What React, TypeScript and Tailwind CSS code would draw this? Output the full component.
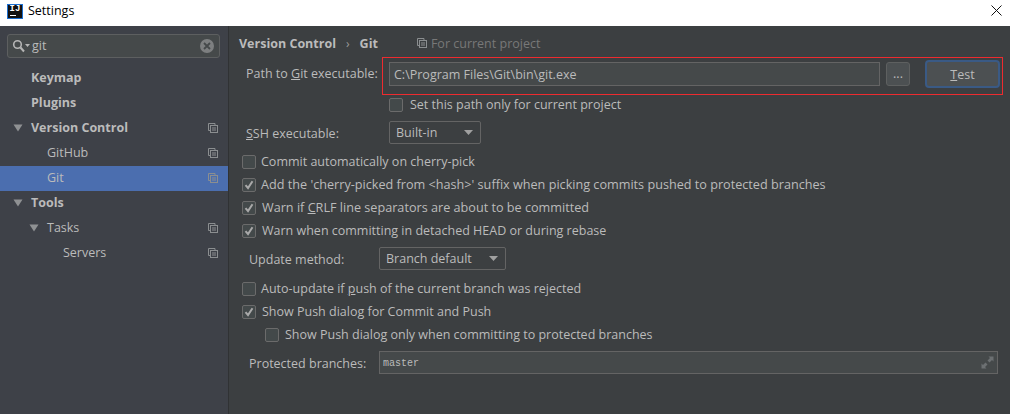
import React from "react";

const CopyIcon = () => (
  <svg width="10" height="10" viewBox="0 0 10 10" fill="none" stroke="#8b8e90" strokeWidth="1" className="shrink-0 mb-[2px]">
    <path d="M2.5 7.5H0.5V0.5H7V2.5" />
    <rect x="2.5" y="2.5" width="7" height="7" />
    <path d="M4 5H8M4 7H8" />
  </svg>
);

const Tri = () => (
  <svg width="10" height="8" viewBox="0 0 10 8" className="shrink-0">
    <path d="M0.5 0.5H9.5L5 7.5Z" fill="#8f9193" />
  </svg>
);

const Row = ({ pl, bold, tri, copy, selected, children }: { pl: string; bold?: boolean; tri?: boolean; copy?: boolean; selected?: boolean; children: React.ReactNode }) => (
  <div className={`h-[25px] flex items-center relative pr-[10px] ${pl} ${selected ? "bg-[#4b6eaf]" : ""}`}>
    {tri && <span className="absolute -ml-[18px] mb-[2px] flex"><Tri /></span>}
    <span className={`flex-1 pb-[2px] ${bold ? "font-bold" : ""}`}>{children}</span>
    {copy && <CopyIcon />}
  </div>
);

const Check = ({ checked }: { checked?: boolean }) => (
  <span className="w-[14px] h-[14px] shrink-0 rounded-[2px] border border-[#6b6b6b] bg-[#43494a] flex items-center justify-center">
    {checked && (
      <svg width="10" height="10" viewBox="0 0 10 10" fill="none" stroke="#a9a9a9" strokeWidth="2">
        <path d="M1.5 5.2L4 8L8.5 1.2" />
      </svg>
    )}
  </span>
);

const CheckRow = ({ checked, gap, className, children }: { checked?: boolean; gap: string; className?: string; children: React.ReactNode }) => (
  <div className={`h-[23px] flex items-center ${gap} ${className ?? ""}`}>
    <Check checked={checked} />
    <span>{children}</span>
  </div>
);

const Select = ({ w, label }: { w: string; label: string }) => (
  <div className={`${w} h-[23px] border border-[#646464] rounded-[2px] flex items-center justify-between pl-[6px] pr-[7px]`}>
    <span>{label}</span>
    <svg width="9" height="5" viewBox="0 0 9 5"><path d="M0 0H9L4.5 5Z" fill="#a0a0a0" /></svg>
  </div>
);

export default function App() {
  return (
    <div className="w-[1010px] h-[414px] flex flex-col overflow-hidden text-[12.5px] leading-[18px] text-[#bbbbbb] bg-[#3c3f41] font-['Open_Sans','Noto_Sans',sans-serif]">
      <div className="h-[26px] bg-white flex items-center pl-[7px] pr-[8px] text-black shrink-0">
        <div className="w-[16px] h-[15px] bg-[#111] border border-[#1c6fd0] flex flex-col items-center mb-[3px] mr-[5px]">
          <span className="text-[9px] leading-[8px] font-bold text-white font-['Liberation_Mono',monospace]">IJ</span>
          <span className="w-[6px] h-[1px] bg-white mt-[2px] mr-[4px]"></span>
        </div>
        <span className="flex-1 mb-[4px]">Settings</span>
        <svg width="11" height="11" viewBox="0 0 11 11" stroke="#111" strokeWidth="1" className="mb-[5px]"><path d="M0.5 0.5L10.5 10.5M10.5 0.5L0.5 10.5" /></svg>
      </div>
      <div className="flex-1 flex">
        <div className="w-[229px] shrink-0 bg-[#3e4148] border-r border-[#303234] pt-[8px]">
          <div className="mx-[7px] w-[213px] h-[24px] border border-[#5d5f60] rounded-[3px] bg-[#45494a] flex items-center pl-[4px] pr-[5px] mb-[8px]">
            <svg width="18" height="14" viewBox="0 0 18 14" fill="none" className="shrink-0">
              <circle cx="5.5" cy="5.5" r="3.8" stroke="#b5b5b5" strokeWidth="1.6" />
              <path d="M8.5 8.5L12 12.5" stroke="#b5b5b5" strokeWidth="2" />
              <path d="M13 5H18L15.5 8Z" fill="#b5b5b5" />
            </svg>
            <span className="flex-1 ml-[2px] pb-[1px]">git</span>
            <span className="w-[14px] h-[14px] rounded-full bg-[#7d7f80] flex items-center justify-center">
              <svg width="8" height="8" viewBox="0 0 8 8" stroke="#45494a" strokeWidth="1.8"><path d="M1 1L7 7M7 1L1 7" /></svg>
            </span>
          </div>
          <Row pl="pl-[31px]" bold>Keymap</Row>
          <Row pl="pl-[31px]" bold>Plugins</Row>
          <Row pl="pl-[31px]" bold tri copy>Version Control</Row>
          <Row pl="pl-[47px]" copy>GitHub</Row>
          <Row pl="pl-[47px]" copy selected>Git</Row>
          <Row pl="pl-[31px]" bold tri>Tools</Row>
          <Row pl="pl-[47px]" tri copy>Tasks</Row>
          <Row pl="pl-[63px]" copy>Servers</Row>
        </div>
        <div className="flex-1 min-w-0 flex flex-col pl-[10px]">
          <div className="h-[31px] pt-[5px] flex items-center whitespace-nowrap">
            <span className="font-bold">Version Control</span>
            <span className="mx-[10px] text-[#9a9a9a] text-[12px]">›</span>
            <span className="font-bold">Git</span>
            <span className="ml-[39px] mr-[4px] flex"><CopyIcon /></span>
            <span className="text-[#787878]">For current project</span>
          </div>
          <div className="flex items-start">
            <span className="w-[143px] pl-[7px] h-[38px] pt-[8px] shrink-0 whitespace-nowrap">Path to <span className="underline">G</span>it executable:</span>
            <div className="w-[621px] h-[38px] border border-[#ee2b2f] flex items-start pl-[6px] pt-[4px]">
              <div className="w-[491px] h-[24px] bg-[#45494a] border border-[#646464] pl-[4px] pt-[2px] flex items-center">C:\Program Files\Git\bin\git.exe</div>
              <div className="w-[24px] h-[24px] ml-[6px] bg-[#4c5052] border border-[#5e6060] rounded-[3px] text-center leading-[22px]">...</div>
              <div className="w-[75px] h-[28px] ml-[15px] -mt-[2px] border-[2px] border-[#3a5a85] rounded-[4px] bg-[#4c5052] pt-[2px] flex items-center justify-center">
                <span><span className="underline">T</span>est</span>
              </div>
            </div>
          </div>
          <CheckRow gap="gap-[7px]" className="ml-[150px] -mt-[2px] mb-[5px]"><>Set this path only for current project</></CheckRow>
          <div className="flex items-center h-[23px] mb-[6px]">
            <span className="w-[150px] pl-[7px] pt-[2px] shrink-0"><span className="underline">S</span>SH executable:</span>
            <Select w="w-[92px]" label="Built-in" />
          </div>
          <div className="pl-[3px] flex flex-col">
            <CheckRow gap="gap-[5px]">Commit automatically on cherry-pick</CheckRow>
            <CheckRow checked gap="gap-[5px]"><span className="text-[12.65px]">{"Add the 'cherry-picked from <hash>' suffix when picking commits pushed to protected branches"}</span></CheckRow>
            <CheckRow checked gap="gap-[6px]"><span className="text-[12.65px]">Warn if <span className="underline">C</span>RLF line separators are about to be committed</span></CheckRow>
            <CheckRow checked gap="gap-[6px]">Warn when committing in detached HEAD or during rebase</CheckRow>
          </div>
          <div className="flex items-center h-[23px] mt-[5px] mb-[7px]">
            <span className="w-[140px] pl-[10px] pt-[2px] shrink-0">Update method:</span>
            <Select w="w-[127px]" label="Branch default" />
          </div>
          <div className="pl-[3px] flex flex-col">
            <CheckRow gap="gap-[5px]"><>Auto-update if <span className="underline">p</span>ush of the current branch was rejected</></CheckRow>
            <CheckRow checked gap="gap-[6px]">Show Push dialog for Commit and Push</CheckRow>
            <CheckRow gap="gap-[6px]" className="ml-[23px]">Show Push dialog only when committing to protected branches</CheckRow>
          </div>
          <div className="flex items-center h-[23px] mt-[5px]">
            <span className="w-[140px] pl-[10px] pt-[2px] shrink-0">Protected branches:</span>
            <div className="w-[619px] h-[23px] bg-[#45494a] border border-[#646464] pl-[3px] pr-[3px] flex items-center justify-between font-['Liberation_Mono',monospace] text-[10px]">
              <span className="pt-[2px]">master</span>
              <svg width="13" height="13" viewBox="0 0 13 13" fill="#6c7072">
                <path d="M7.5 0.5H12.5V5.5L11 4L8.5 6.5L6.5 4.5L9 2Z" />
                <path d="M0.5 7.5V12.5H5.5L4 11L6.5 8.5L4.5 6.5L2 9Z" />
              </svg>
            </div>
          </div>
        </div>
      </div>
    </div>
  );
}
